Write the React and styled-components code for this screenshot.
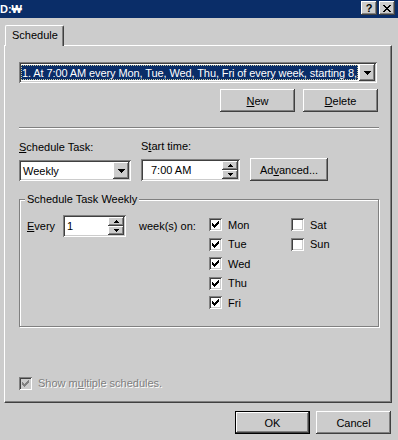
import React from 'react'
import styled, { createGlobalStyle, css } from 'styled-components'

const GRAY = '#cccccc'
const NAVY = '#0a2d68'

const GlobalStyle = createGlobalStyle`
  html, body {
    margin: 0;
    background: ${GRAY};
  }
  body {
    font-family: "Liberation Sans", Arial, sans-serif;
    font-size: 11px;
    color: #000;
  }
`

const raised = css`
  background: ${GRAY};
  box-shadow: inset -1px -1px #404040, inset 1px 1px #fff,
    inset -2px -2px #808080, inset 2px 2px ${GRAY};
`

const sunken = css`
  background: #fff;
  box-shadow: inset 1px 1px #808080, inset -1px -1px #fff,
    inset 2px 2px #404040, inset -2px -2px ${GRAY};
`

const Window = styled.div`
  width: 398px;
  height: 440px;
  background: ${GRAY};
  overflow: hidden;
`

const TitleBar = styled.div`
  height: 18px;
  background: ${NAVY};
  display: flex;
  align-items: center;
  justify-content: space-between;
  padding-right: 3px;
  box-sizing: border-box;
`

const Title = styled.span`
  color: #fff;
  font-weight: bold;
  font-size: 11px;
  line-height: 18px;
`

const TitleButtons = styled.div`
  display: flex;
  gap: 2px;
  margin-top: -2px;
`

const TitleButton = styled.div`
  ${raised};
  width: 16px;
  height: 14px;
  display: flex;
  align-items: center;
  justify-content: center;
  font-weight: bold;
  font-size: 11px;
  line-height: 14px;
`

const Body = styled.div`
  padding: 7px 6px 0 4px;
`

const TabStrip = styled.div`
  display: flex;
  padding-left: 1px;
`

const Tab = styled.div`
  position: relative;
  z-index: 1;
  width: 59px;
  height: 21px;
  margin-bottom: -1px;
  box-sizing: border-box;
  background: ${GRAY};
  border-top: 1px solid #fff;
  border-left: 1px solid #fff;
  border-right: 1px solid #404040;
  border-radius: 2px 2px 0 0;
  box-shadow: inset -1px 0 #808080;
  padding: 3px 0 0 6px;
  line-height: 13px;
`

const Panel = styled.div`
  width: 388px;
  height: 358px;
  box-sizing: border-box;
  border-top: 1px solid #fff;
  border-left: 1px solid #fff;
  border-right: 1px solid #404040;
  border-bottom: 1px solid #404040;
  box-shadow: inset -1px -1px #808080;
  padding: 16px 12px 0 14px;
  display: flex;
  flex-direction: column;
`

const Field = styled.div`
  ${sunken};
  width: ${p => p.$width}px;
  height: ${p => p.$height || 21}px;
  box-sizing: border-box;
  padding: 2px;
  display: flex;
  align-items: stretch;
`

const FieldValue = styled.div`
  flex: 1;
  display: flex;
  align-items: center;
  padding-left: ${p => p.$indent || 1}px;
  white-space: nowrap;
  overflow: hidden;
`

const SelectedText = styled.span`
  flex: 1;
  min-width: 0;
  align-self: stretch;
  display: flex;
  align-items: center;
  background: ${NAVY};
  color: #fff;
  outline: 1px dotted #c8c8a0;
  outline-offset: -1px;
  padding-left: 1px;
  margin: 1px 1px 1px 0;
  overflow: hidden;
  white-space: nowrap;
  letter-spacing: -0.1px;
`

const DropButton = styled.div`
  ${raised};
  width: 16px;
  flex: none;
  display: flex;
  align-items: center;
  justify-content: center;
`

const SpinStack = styled.div`
  width: 16px;
  display: flex;
  flex-direction: column;
`

const SpinButton = styled.div`
  ${raised};
  flex: 1;
  display: flex;
  align-items: center;
  justify-content: center;
`

const Button = styled.div`
  ${raised};
  width: ${p => p.$width || 75}px;
  height: 23px;
  margin-left: ${p => p.$offset || 0}px;
  display: flex;
  align-items: center;
  justify-content: center;
  ${p =>
    p.$default &&
    css`
      box-shadow: inset 0 0 0 1px #000, inset -2px -2px #404040,
        inset 2px 2px #fff, inset -3px -3px #808080;
    `}
`

const ButtonRow = styled.div`
  display: flex;
  justify-content: flex-end;
  gap: 8px;
  margin-top: 6px;
  padding-right: 1px;
`

const Separator = styled.div`
  height: 1px;
  margin-top: 15px;
  background: #808080;
  box-shadow: 0 1px #fff;
`

const ControlsRow = styled.div`
  display: flex;
  align-items: flex-end;
  margin-top: 12px;
`

const FieldCol = styled.div`
  display: flex;
  flex-direction: column;
  gap: 6px;
  margin-left: ${p => p.$offset || 0}px;
`

const Label = styled.span`
  line-height: 13px;
  white-space: nowrap;
`

const GroupBox = styled.fieldset`
  margin: 12px 0 0;
  padding: 9px 0 13px 7px;
  min-width: 0;
  border: 1px solid #808080;
  box-shadow: inset 1px 1px #fff, 1px 1px #fff;
  display: flex;
  align-items: flex-start;
`

const Legend = styled.legend`
  padding: 0 2px;
  margin-left: -2px;
  line-height: 13px;
  background: ${GRAY};
`

const EveryRow = styled.div`
  display: flex;
  align-items: center;
  height: 21px;
`

const EveryLabel = styled.span`
  width: 36px;
`

const WeekLabel = styled.span`
  width: 70px;
  margin-left: 13px;
`

const DayColumn = styled.div`
  width: ${p => p.$width || 82}px;
  display: grid;
  grid-auto-rows: 19.5px;
`

const CheckRow = styled.label`
  display: flex;
  align-items: center;
  gap: 6px;
  color: ${p => (p.$disabled ? '#808080' : '#000')};
  text-shadow: ${p => (p.$disabled ? '1px 1px #fff' : 'none')};
`

const Box = styled.span`
  ${sunken};
  width: 13px;
  height: 13px;
  flex: none;
  display: flex;
  align-items: center;
  justify-content: center;
  background: ${p => (p.$disabled ? GRAY : '#fff')};
`

const ShowMultiple = styled.div`
  margin-top: 50px;
`

const Footer = styled.div`
  display: flex;
  justify-content: flex-end;
  gap: 6px;
  margin-top: 8px;
  padding-right: 1px;
`

const CHECK_COLS = [2, 3, 4, 3, 2, 1, 0]

const CheckMark = ({ color }) => (
  <svg width="7" height="7" viewBox="0 0 7 7" shapeRendering="crispEdges">
    {CHECK_COLS.map((y, x) => (
      <rect key={x} x={x} y={y} width="1" height="3" fill={color} />
    ))}
  </svg>
)

const DownArrow = () => (
  <svg width="7" height="4" viewBox="0 0 7 4" shapeRendering="crispEdges">
    <path d="M0 0h7v1H0zM1 1h5v1H1zM2 2h3v1H2zM3 3h1v1H3z" fill="#000" />
  </svg>
)

const SmallArrow = ({ up }) => (
  <svg width="5" height="3" viewBox="0 0 5 3" shapeRendering="crispEdges">
    <path
      d={up ? 'M2 0h1v1H2zM1 1h3v1H1zM0 2h5v1H0z' : 'M0 0h5v1H0zM1 1h3v1H1zM2 2h1v1H2z'}
      fill="#000"
    />
  </svg>
)

const CloseGlyph = () => (
  <svg width="8" height="7" viewBox="0 0 8 7" shapeRendering="crispEdges">
    <path
      d="M0 0h2v1H0zM6 0h2v1H6zM1 1h2v1H1zM5 1h2v1H5zM2 2h4v1H2zM3 3h2v1H3zM2 4h4v1H2zM1 5h2v1H1zM5 5h2v1H5zM0 6h2v1H0zM6 6h2v1H6z"
      fill="#000"
    />
  </svg>
)

const CheckBox = ({ label, checked, disabled }) => (
  <CheckRow $disabled={disabled}>
    <Box $disabled={disabled}>{checked && <CheckMark color={disabled ? '#808080' : '#000'} />}</Box>
    <span>{label}</span>
  </CheckRow>
)

const Spinner = ({ width, value, indent }) => (
  <Field $width={width} $height={22}>
    <FieldValue $indent={indent}>{value}</FieldValue>
    <SpinStack>
      <SpinButton>
        <SmallArrow up />
      </SpinButton>
      <SpinButton>
        <SmallArrow />
      </SpinButton>
    </SpinStack>
  </Field>
)

export default function App() {
  return (
    <>
      <GlobalStyle />
      <Window>
        <TitleBar>
          <Title>D:₩</Title>
          <TitleButtons>
            <TitleButton>?</TitleButton>
            <TitleButton>
              <CloseGlyph />
            </TitleButton>
          </TitleButtons>
        </TitleBar>
        <Body>
          <TabStrip>
            <Tab>Schedule</Tab>
          </TabStrip>
          <Panel>
            <Field $width={358}>
              <SelectedText>1. At 7:00 AM every Mon, Tue, Wed, Thu, Fri of every week, starting 8,</SelectedText>
              <DropButton>
                <DownArrow />
              </DropButton>
            </Field>
            <ButtonRow>
              <Button>
                <u>N</u>ew
              </Button>
              <Button>
                <u>D</u>elete
              </Button>
            </ButtonRow>
            <Separator />
            <ControlsRow>
              <FieldCol>
                <Label>
                  <u>S</u>chedule Task:
                </Label>
                <Field $width={112}>
                  <FieldValue $indent={2}>Weekly</FieldValue>
                  <DropButton>
                    <DownArrow />
                  </DropButton>
                </Field>
              </FieldCol>
              <FieldCol $offset={10}>
                <Label>
                  S<u>t</u>art time:
                </Label>
                <Spinner width={99} value="7:00 AM" indent={8} />
              </FieldCol>
              <Button $width={78} $offset={10}>
                Ad<u>v</u>anced...
              </Button>
            </ControlsRow>
            <GroupBox>
              <Legend>Schedule Task Weekly</Legend>
              <EveryRow>
                <EveryLabel>
                  <u>E</u>very
                </EveryLabel>
                <Spinner width={63} value="1" indent={2} />
                <WeekLabel>week(s) on:</WeekLabel>
              </EveryRow>
              <DayColumn>
                {['Mon', 'Tue', 'Wed', 'Thu', 'Fri'].map(d => (
                  <CheckBox key={d} label={d} checked />
                ))}
              </DayColumn>
              <DayColumn $width={70}>
                {['Sat', 'Sun'].map(d => (
                  <CheckBox key={d} label={d} />
                ))}
              </DayColumn>
            </GroupBox>
            <ShowMultiple>
              <CheckBox
                checked
                disabled
                label={
                  <>
                    Show m<u>u</u>ltiple schedules.
                  </>
                }
              />
            </ShowMultiple>
          </Panel>
          <Footer>
            <Button $default>OK</Button>
            <Button>Cancel</Button>
          </Footer>
        </Body>
      </Window>
    </>
  )
}
